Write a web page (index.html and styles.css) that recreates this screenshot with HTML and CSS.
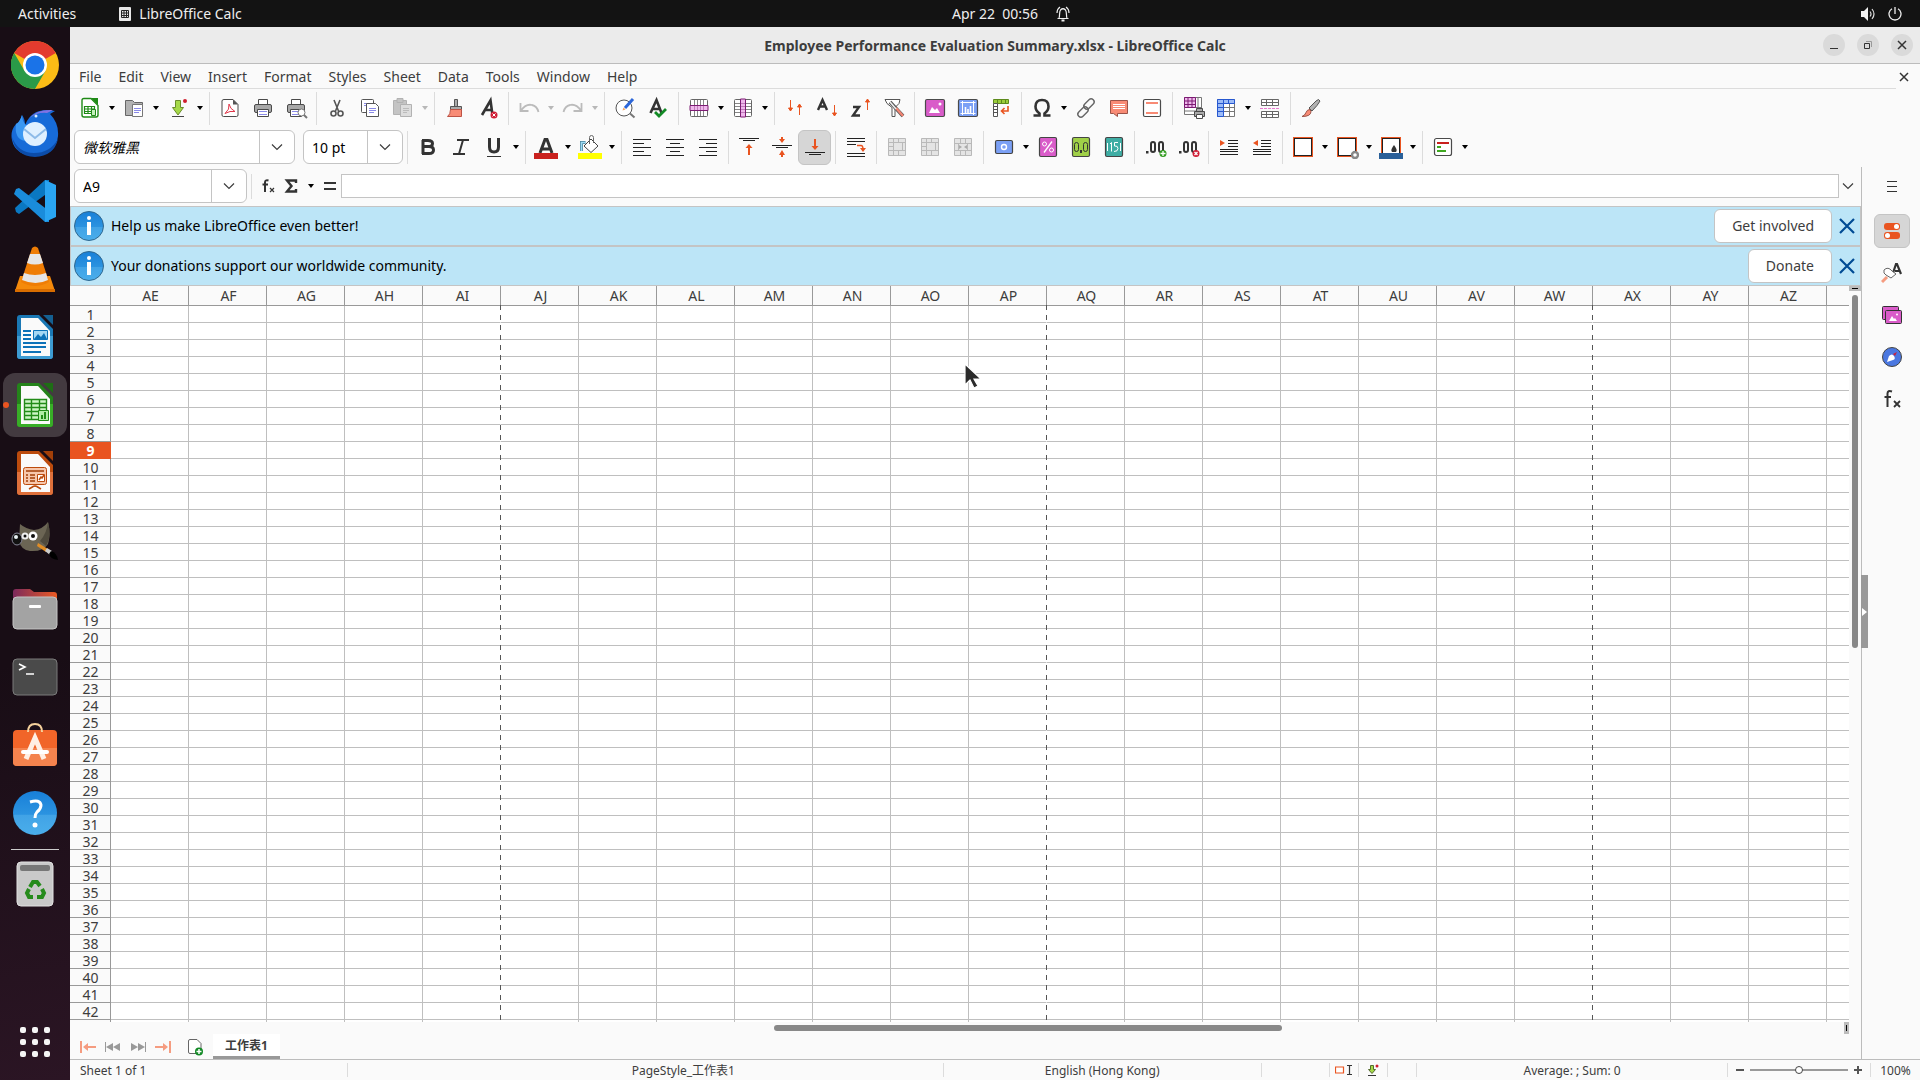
FILE: index.html
```
<!DOCTYPE html>
<html lang="en">

<head>
    <meta charset="UTF-8">
    <meta name="viewport" content="width=device-width, initial-scale=1.0">
    <title>Employee Performance Evaluation Summary.xlsx - LibreOffice Calc</title>
    <link rel="stylesheet" href="styles.css">
</head>

<body>
    <!-- shared shapes -->
    <svg class="defs" aria-hidden="true">
        <symbol id="arrow" viewBox="0 0 8 4"><path d="M1 0h6L4 4z" fill="currentColor"/></symbol>
        <symbol id="chevron" viewBox="0 0 12 8"><path d="M1 1.5l5 5 5-5" fill="none" stroke="currentColor" stroke-width="1.2"/></symbol>
        <symbol id="merge" viewBox="0 0 24 24"><path d="M3.500 3.500h17v17h-17zM3.500 7.500h5M3.500 11.500h5M3.500 15.500h5M8.500 3.500v17M8.500 7.500h12M8.500 15.500h12M13.500 3.500v4M13.500 15.500v5M17.500 7.500v8" fill="#e4e4e4" stroke="#b9b9b9"/></symbol>
        <linearGradient id="blue" x1="0" y1="0" x2="0" y2="1"><stop offset="0" stop-color="#187fd8"/><stop offset=".53" stop-color="#2b93e0"/><stop offset=".55" stop-color="#41a3e6"/><stop offset="1" stop-color="#4aaeeb"/></linearGradient>
        <symbol id="info" viewBox="0 0 30 30"><circle cx="15" cy="15" r="14.500" fill="url(#blue)" stroke="#31688f"/><circle cx="15" cy="7" r="2" fill="#fff"/><path d="M13 11h4v13h-4z" fill="#fff"/></symbol>
        <symbol id="cross" viewBox="0 0 16 16"><path d="M1 1l14 14M15 1L1 15" stroke="#004b94" stroke-width="2.200" fill="none"/></symbol>
    </svg>

    <header class="topbar">
        <div class="topbar-left">
            <button class="top-btn">Activities</button>
            <button class="top-btn app-name">
                <svg width="12" height="14" viewBox="0 0 12 14"><rect width="12" height="14" rx="1" fill="#e8e8e8"/><path d="M2.500 3.500h7v7h-7zM2.500 6h7M2.500 8.500h7M5 3.500v7M7.500 3.500v7" stroke="#222" fill="none"/></svg>
                LibreOffice Calc
            </button>
        </div>
        <button class="top-btn clock">
            <span>Apr 22&nbsp; 00:56</span>
            <svg width="14" height="16" viewBox="0 0 14 16" fill="none" stroke="#eee" stroke-width="1.200"><path d="M1.500 12.500h11M3 12c1-2 0-6 1.500-8Q7 1.500 9.500 4C11 6 10 10 11 12M1 7q0-4 3-6M13 7q0-4-3-6"/><path d="M5.500 14.500h3" stroke-width="2"/></svg>
        </button>
        <button class="top-btn system" aria-label="System menu">
            <svg width="16" height="14" viewBox="0 0 16 14"><path d="M1 4h3l4-4v14l-4-4H1z" fill="#f2f2f2"/><path d="M10 4.500q2 2.500 0 5M12 2q4 5 0 10" stroke="#ddd" stroke-width="1.200" fill="none"/></svg>
            <svg width="14" height="14" viewBox="0 0 14 14" fill="none" stroke="#eee" stroke-width="1.300"><path d="M4 1.800a6 6 0 1 0 6 0M7 0v7"/></svg>
        </button>
    </header>

    <div class="desktop">
        <nav class="dock" aria-label="Dock">
            <button class="dock-btn" aria-label="Chrome">
                <svg width="48" height="48" viewBox="0 0 48 48"><circle cx="24" cy="24" r="24" fill="#fbbc16"/><path d="M24 24L3.200 12A24 24 0 0 1 44.800 12z" fill="#e33b2e"/><path d="M3.200 12A24 24 0 0 0 24 48L34.400 30H24L13.600 30z" fill="#2a9a48"/><circle cx="24" cy="24" r="12" fill="#fff"/><circle cx="24" cy="24" r="9.500" fill="#1a73e8"/></svg>
            </button>
            <button class="dock-btn" aria-label="Thunderbird">
                <svg width="48" height="48" viewBox="0 0 48 48"><path d="M5 15q4-2 6-9 3 4 3 10Q20 1 36 1l8 1-5 3q9 9 8 22-2 19-23 20Q4 46 1 31q-2-9 4-16z" fill="#176bd8"/><path d="M5 15q-2 15 9 17-1-9 2-15-5-4-5-11-2 7-6 9z" fill="#3b98f2"/><path d="M19 9q7-9 23-8l-6 3Q26 3 19 9z" fill="#8272e2"/><path d="M1 28q3 19 23 20 19-1 23-18-8 14-24 14T1 28z" fill="#0c4ca9"/><circle cx="24" cy="25" r="12" fill="#dff0ff"/><path d="M13 20l11 9 11-9" fill="none" stroke="#8dbbe8" stroke-width="2"/><circle cx="25" cy="7" r="1.500" fill="#d9eefe"/></svg>
            </button>
            <button class="dock-btn" aria-label="Visual Studio Code">
                <svg width="44" height="44" viewBox="0 0 44 44"><path d="M32 1L2 29l1 4 3 2L36 13V1z" fill="#0a78c2"/><path d="M32 43L1 15l2-5 3-1 30 23v11z" fill="#1a8cdb"/><path d="M32 1l11 5v32l-11 5z" fill="#2aa5f2"/></svg>
            </button>
            <button class="dock-btn" aria-label="VLC">
                <svg width="42" height="46" viewBox="0 0 42 46"><path d="M6 30h30l5 15H1z" fill="#f58a0b"/><path d="M1 43h40v3H1z" fill="#d96d00"/><path d="M18 2q3-3 6 0l11 34q-14 8-28 0z" fill="#ef7d05"/><path d="M16 8h10l3 9q-8 3-16 0zM10 27q11 4 22 0l2 7q-12 6-26 0z" fill="#e6e6e6"/></svg>
            </button>
            <button class="dock-btn" aria-label="LibreOffice Writer">
                <svg width="38" height="46" viewBox="0 0 38 46"><path d="M4 1h19l14 14v27q0 3-3 3H4q-3 0-3-3V4q0-3 3-3z" fill="#1a78b5"/><path d="M4 22h33v20q0 3-3 3H4q-3 0-3-3V22z" fill="#3d9bd2"/><path d="M5 4h17l12 13v25H5z" fill="#fafafa"/><path d="M27 1h10v10z" fill="#145f91"/><path d="M7 17h8M7 21h8M7 25h8M7 29h23M7 33h23M7 38h18" stroke="#0d72b8" stroke-width="2"/><path d="M17.500 16.500h14v9h-14z" fill="#a6d7f3" stroke="#0d72b8"/><path d="M18 25l4-5 3 3 3-4 3 6z" fill="#0d72b8"/></svg>
            </button>
            <button class="dock-btn running" aria-label="LibreOffice Calc">
                <svg width="38" height="46" viewBox="0 0 38 46"><path d="M4 1h19l14 14v27q0 3-3 3H4q-3 0-3-3V4q0-3 3-3z" fill="#24831a"/><path d="M4 22h33v20q0 3-3 3H4q-3 0-3-3V22z" fill="#38ae27"/><path d="M5 4h17l12 13v25H5z" fill="#fafafa"/><path d="M27 1h10v10z" fill="#1e6d15"/><path d="M8.500 17.500h22v20h-22zM8.500 21.500h22M8.500 25.500h22M8.500 29.500h22M8.500 33.500h22M15.500 17.500v20M23.500 17.500v20" fill="#cdf5c5" stroke="#228b18" stroke-width="1.400"/><path d="M22.500 28.500h10v10h-10z" fill="#b0eca5" stroke="#228b18"/><path d="M25 37v-4h2v4M28 37v-7h2v7" fill="#228b18"/></svg>
            </button>
            <button class="dock-btn" aria-label="LibreOffice Impress">
                <svg width="38" height="46" viewBox="0 0 38 46"><path d="M4 1h19l14 14v27q0 3-3 3H4q-3 0-3-3V4q0-3 3-3z" fill="#bc4b0d"/><path d="M4 22h33v20q0 3-3 3H4q-3 0-3-3V22z" fill="#de703b"/><path d="M5 4h17l12 13v25H5z" fill="#fafafa"/><path d="M27 1h10v10z" fill="#a23f08"/><rect x="7.500" y="17.500" width="23" height="17" rx="2" fill="#f7c7ac" stroke="#bc4b0d"/><path d="M10 21h18M10 25h2m2 0h5M10 28h2m2 0h5M10 31h2m2 0h5" stroke="#a23f08" stroke-width="1.500"/><path d="M21.500 24.500h7v7h-7z" fill="#fff" stroke="#bc4b0d"/><path d="M23 30l2-3 1 1 2-3M19 35v2M18 36l-5 3M20 36l5 3" stroke="#bc4b0d" stroke-width="1.500" fill="none"/></svg>
            </button>
            <button class="dock-btn" aria-label="GIMP">
                <svg width="48" height="42" viewBox="0 0 48 42"><path d="M9 4q6 5 14 6 9-1 14-8 3 12 0 22-5 8-18 7-9-1-11-10z" fill="#6b6554"/><path d="M37 2q4 15-2 24l-6-5q7-8 8-19z" fill="#4f4a3d"/><ellipse cx="6" cy="19" rx="5" ry="6" fill="#111" stroke="#889"/><ellipse cx="5" cy="17" rx="2" ry="2" fill="#e8f0f4"/><circle cx="14" cy="16" r="3.500" fill="#eee"/><circle cx="22" cy="16" r="4.500" fill="#fff"/><circle cx="14" cy="16" r="1.500" fill="#111"/><circle cx="22" cy="16" r="2" fill="#111"/><path d="M27 23l10 6-2 3-9-6z" fill="#e08d25"/><path d="M36 28l5 3-2 4-5-4z" fill="#ccc"/><path d="M40 31q6 2 7 9-8-1-9-6z" fill="#000"/></svg>
            </button>
            <button class="dock-btn" aria-label="Files">
                <svg width="46" height="42" viewBox="0 0 46 42"><defs><linearGradient id="folder"><stop offset="0" stop-color="#7c2a5c"/><stop offset="1" stop-color="#ea5a24"/></linearGradient></defs><path d="M4 1h14l4 3h20q3 0 3 3v15H1V4q0-3 3-3z" fill="url(#folder)"/><rect x="1" y="9" width="44" height="32" rx="4" fill="#a3a3a3" stroke="#c4c4c4"/><rect x="17" y="17" width="12" height="3" rx="1" fill="#fff"/></svg>
            </button>
            <button class="dock-btn" aria-label="Terminal">
                <svg width="46" height="38" viewBox="0 0 46 38"><rect x="1" y="1" width="44" height="36" rx="4" fill="#4a4a4a" stroke="#7b7b7b"/><path d="M7 6l6 3-6 3M14 16h8" fill="none" stroke="#fff" stroke-width="1.600"/></svg>
            </button>
            <button class="dock-btn" aria-label="Software">
                <svg width="46" height="44" viewBox="0 0 46 44"><rect x="1" y="7" width="44" height="36" rx="4" fill="#f16529"/><path d="M1 25h44v14q0 4-4 4H5q-4 0-4-4z" fill="#f4834e"/><path d="M16 9q0-8 7-8t7 8" fill="none" stroke="#f5d19c" stroke-width="2"/><path d="M14 36l9-21 9 21" fill="none" stroke="#ffefe4" stroke-width="5"/><path d="M11 29h24" stroke="#fff" stroke-width="4" stroke-linecap="round"/></svg>
            </button>
            <button class="dock-btn" aria-label="Help">
                <svg width="46" height="46" viewBox="0 0 46 46"><circle cx="23" cy="23" r="22" fill="url(#blue)"/><path d="M18 12q10-3 11 3 0 4-4 7-2 2-2 6" fill="none" stroke="#fff" stroke-width="3"/><circle cx="23" cy="35" r="2.500" fill="#fff"/></svg>
            </button>
            <hr class="dock-line">
            <button class="dock-btn" aria-label="Trash">
                <svg width="38" height="46" viewBox="0 0 38 46"><rect x="1" y="1" width="36" height="44" rx="4" fill="#c9c9c9" stroke="#e2e2e2"/><rect x="4" y="4" width="30" height="6" rx="2" fill="#777"/><g fill="none" stroke="#268b1c" stroke-width="4"><path d="M14 26l3-5h4l3 4"/><path d="M26 28l2 4-2 4h-5"/><path d="M17 36h-4l-2-4 2-4"/></g></svg>
            </button>
            <button class="dock-btn apps" aria-label="Show Applications">
                <svg width="30" height="30" viewBox="0 0 30 30" fill="#f5f5f5"><rect width="6" height="6" rx="2"/><rect x="12" width="6" height="6" rx="2"/><rect x="24" width="6" height="6" rx="2"/><rect y="12" width="6" height="6" rx="2"/><rect x="12" y="12" width="6" height="6" rx="2"/><rect x="24" y="12" width="6" height="6" rx="2"/><rect y="24" width="6" height="6" rx="2"/><rect x="12" y="24" width="6" height="6" rx="2"/><rect x="24" y="24" width="6" height="6" rx="2"/></svg>
            </button>
        </nav>

        <main class="window">
            <div class="titlebar">
                <h1 class="title">Employee Performance Evaluation Summary.xlsx - LibreOffice Calc</h1>
                <div class="window-btns">
                    <button class="win-btn" aria-label="Minimize"><svg width="10" height="10" viewBox="0 0 10 10"><path d="M1 8.500h8" stroke="#333"/></svg></button>
                    <button class="win-btn" aria-label="Restore"><svg width="10" height="10" viewBox="0 0 10 10" fill="none"><path d="M1.500 3.500h5v5h-5z" stroke="#333"/><path d="M3 1.500h5.500v5.500" stroke="#999"/></svg></button>
                    <button class="win-btn" aria-label="Close"><svg width="10" height="10" viewBox="0 0 10 10"><path d="M1 1l8 8M9 1L1 9" stroke="#333" stroke-width="1.500"/></svg></button>
                </div>
            </div>

            <div class="menubar">
                <div class="menus">
                    <button>File</button>
                    <button>Edit</button>
                    <button>View</button>
                    <button>Insert</button>
                    <button>Format</button>
                    <button>Styles</button>
                    <button>Sheet</button>
                    <button>Data</button>
                    <button>Tools</button>
                    <button>Window</button>
                    <button>Help</button>
                </div>
                <button class="close-doc" aria-label="Close document"><svg width="10" height="10" viewBox="0 0 10 10"><path d="M1 1l8 8M9 1L1 9" stroke="#333" stroke-width="1.500"/></svg></button>
            </div>

            <!-- standard toolbar -->
            <div class="toolbar">
                <button class="tool" aria-label="New"><svg viewBox="0 0 24 24"><path d="M6 2.500h7l7 7V19q0 2-2 2H6q-2 0-2-2V4.500q0-2 2-2z" fill="#fff" stroke="#1f8a16" stroke-width="1.400"/><path d="M13 2h7v7z" fill="#1f8a16"/><path d="M6.500 10.500h10v7h-10zM6.500 13h10M6.500 15.500h10M10 10.500v7M13.500 10.500v7" fill="none" stroke="#1f8a16" stroke-width="1.200"/><path d="M13.500 13.500h4v6h-4z" fill="#c3f0bc" stroke="#1f8a16"/></svg></button><button class="drop" aria-label="New menu"><svg><use href="#arrow"/></svg></button>
                <button class="tool" aria-label="Open"><svg viewBox="0 0 24 24"><path d="M3.500 4.500h7l2 2h8v13h-17z" fill="#b2b2b2" stroke="#666"/><path d="M10.500 8.500h10v12h-10z" fill="#fff" stroke="#777"/><path d="M12 12.500h7M12 14.500h7M12 16.500h5" stroke="#8a8ae8"/></svg></button><button class="drop" aria-label="Open menu"><svg><use href="#arrow"/></svg></button>
                <button class="tool" aria-label="Save"><svg viewBox="0 0 24 24"><path d="M9.500 4.500h5v7h3L12 19l-5.500-7.500h3z" fill="#a5d948" stroke="#6a8c2a"/><path d="M6 20.500h12" stroke="#444"/><circle cx="19" cy="5" r="2" fill="#cf1e2e"/></svg></button><button class="drop" aria-label="Save menu"><svg><use href="#arrow"/></svg></button>
                <i class="sep"></i>
                <button class="tool" aria-label="Export as PDF"><svg viewBox="0 0 24 24"><path d="M6 3.500h9l5 5V19q0 1.500-1.500 1.500h-13Q4 20.500 4 19V5q0-1.500 2-1.500z" fill="#fff" stroke="#4a4a4a"/><path d="M15 3.500v5h5z" fill="#555"/><path d="M11 8q1 5 6 7.500-5-1-10 2 5-4 4-9.500z" fill="none" stroke="#e0384b"/></svg></button>
                <button class="tool" aria-label="Print"><svg viewBox="0 0 24 24"><path d="M7.500 3.500h9v5h-9z" fill="#fff" stroke="#4a4a4a"/><rect x="3.500" y="8.500" width="17" height="8" rx="1.500" fill="#a8a8a8" stroke="#4a4a4a"/><path d="M6.500 13.500h11v7h-11z" fill="#fff" stroke="#4a4a4a"/><path d="M8 15.500h8M8 18.500h8" stroke="#8a8ae8"/></svg></button>
                <button class="tool" aria-label="Print Preview"><svg viewBox="0 0 24 24"><path d="M7.500 3.500h9v5h-9z" fill="#fff" stroke="#4a4a4a"/><rect x="3.500" y="8.500" width="17" height="8" rx="1.500" fill="#a8a8a8" stroke="#4a4a4a"/><path d="M6.500 13.500h11v7h-11z" fill="#fff" stroke="#4a4a4a"/><path d="M8 15.500h6M8 18.500h6" stroke="#8a8ae8"/><circle cx="17.500" cy="16.500" r="3.500" fill="#fff" stroke="#777"/><path d="M20 19l3 3" stroke="#777" stroke-width="2"/></svg></button>
                <i class="sep"></i>
                <button class="tool" aria-label="Cut"><svg viewBox="0 0 24 24" fill="none" stroke="#555" stroke-width="1.600"><path d="M9 4l4.500 11M15 4l-4.500 11"/><circle cx="8.500" cy="17.500" r="2.500"/><circle cx="15.500" cy="17.500" r="2.500"/></svg></button>
                <button class="tool" aria-label="Copy"><svg viewBox="0 0 24 24"><rect x="3.500" y="3.500" width="12" height="13" rx="1" fill="#fff" stroke="#555"/><path d="M6 7.500h5M6 9.500h3" stroke="#8a8ae8"/><path d="M8.500 7.500h9l3 3v10h-12z" fill="#fff" stroke="#555"/><path d="M11 12.500h7M11 14.500h7M11 16.500h5" stroke="#8a8ae8"/></svg></button>
                <button class="tool" aria-label="Paste" disabled><svg viewBox="0 0 24 24"><path d="M2.500 4.500h13v14h-13z" fill="#c4c4c4" stroke="#b2b2b2"/><path d="M6 2.500h6v4H6z" fill="#c4c4c4" stroke="#b2b2b2"/><path d="M9.500 8.500h11v12h-11z" fill="#ddd" stroke="#b2b2b2"/><path d="M12 12.500h6M12 14.500h6M12 16.500h4" stroke="#bbb"/></svg></button><button class="drop" disabled aria-label="Paste menu"><svg><use href="#arrow"/></svg></button>
                <i class="sep"></i>
                <button class="tool" aria-label="Clone Formatting"><svg viewBox="0 0 24 24"><path d="M11.500 3.500h3v7h-3z" fill="#aaa" stroke="#555"/><path d="M7.500 10.500h11v3h-11z" fill="#aaa" stroke="#555"/><path d="M7.500 13.500h11v7h-14q3-2 3-7z" fill="#f88b75" stroke="#bd5345"/></svg></button>
                <button class="tool" aria-label="Clear Formatting"><svg viewBox="0 0 24 24"><path d="M6 19L14.500 4.500l2 14.500M9 14h7" fill="none" stroke="#333" stroke-width="2.600"/><circle cx="18" cy="19" r="3.500" fill="#d01e36"/><path d="M16.500 17.500l3 3m0-3l-3 3" stroke="#fff"/></svg></button>
                <i class="sep"></i>
                <button class="tool" aria-label="Undo" disabled><svg viewBox="0 0 24 24"><path d="M3.500 7v8h8M4 14.500q5-7 11-5.500 5 1 6.500 7" fill="none" stroke="#bbb" stroke-width="1.800"/></svg></button><button class="drop" disabled aria-label="Undo menu"><svg><use href="#arrow"/></svg></button>
                <button class="tool" aria-label="Redo" disabled><svg viewBox="0 0 24 24"><path d="M20.500 7v8h-8M20 14.500q-5-7-11-5.500-5 1-6.500 7" fill="none" stroke="#bbb" stroke-width="1.800"/></svg></button><button class="drop" disabled aria-label="Redo menu"><svg><use href="#arrow"/></svg></button>
                <i class="sep"></i>
                <button class="tool" aria-label="Find and Replace"><svg viewBox="0 0 24 24"><circle cx="11" cy="12" r="8" fill="#fff" stroke="#555"/><path d="M17 17.500l4.500 4" stroke="#777" stroke-width="2"/><path d="M12 12l8-9" stroke="#2c66d8" stroke-width="3"/><path d="M9.500 14.500l1-3 2 2z" fill="#f4a460"/></svg></button>
                <button class="tool" aria-label="Spelling"><svg viewBox="0 0 24 24"><path d="M4.500 17L10.500 4l5 13M7 13h8" fill="none" stroke="#333" stroke-width="2.600"/><path d="M9 16l4 4 7-7" fill="none" stroke="#138a26" stroke-width="2.800"/></svg></button>
                <i class="sep"></i>
                <button class="tool" aria-label="Row"><svg viewBox="0 0 24 24"><rect x="3.500" y="3.500" width="17" height="17" rx="1" fill="#fff" stroke="#666"/><path d="M7.500 4v16M10.500 4v16M13.500 4v16M16.500 4v16" stroke="#888"/><path d="M3 9.500h18v5H3z" fill="#efb8ec" stroke="#7c1b73"/><path d="M7.500 10v4M10.500 10v4M13.500 10v4M16.500 10v4" stroke="#c07aba"/></svg></button><button class="drop" aria-label="Row menu"><svg><use href="#arrow"/></svg></button>
                <button class="tool" aria-label="Column"><svg viewBox="0 0 24 24"><rect x="3.500" y="3.500" width="17" height="17" rx="1" fill="#fff" stroke="#666"/><path d="M4 7.500h16M4 10.500h16M4 13.500h16M4 16.500h16" stroke="#888"/><path d="M9.500 3v18h5V3z" fill="#efb8ec" stroke="#7c1b73"/><path d="M10 7.500h4M10 10.500h4M10 13.500h4M10 16.500h4" stroke="#c07aba"/></svg></button><button class="drop" aria-label="Column menu"><svg><use href="#arrow"/></svg></button>
                <i class="sep"></i>
                <button class="tool" aria-label="Sort"><svg viewBox="0 0 24 24" fill="#e95420" stroke="#e95420"><path d="M7.500 4v10M5.500 12l2 3 2-3zM16.500 19V9M14.500 11l2-3 2 3z"/></svg></button>
                <button class="tool" aria-label="Sort Ascending"><svg viewBox="0 0 24 24"><path d="M2 14L6.500 4 11 14M4 10.500h5" fill="none" stroke="#333" stroke-width="2.400"/><path d="M18.500 9v10M16.500 17l2 3 2-3z" fill="#e95420" stroke="#e95420"/></svg></button>
                <button class="tool" aria-label="Sort Descending"><svg viewBox="0 0 24 24"><path d="M4 11h6l-6 8.500h7" fill="none" stroke="#333" stroke-width="2.400"/><path d="M18.500 14V4M16.500 6l2-3 2 3z" fill="#e95420" stroke="#e95420"/></svg></button>
                <button class="tool" aria-label="AutoFilter"><svg viewBox="0 0 24 24"><path d="M3 3.500h15l-1 4-4 4v9h-3v-9l-5-4z" fill="#fff" stroke="#555"/><path d="M8 6l13 14" stroke="#555" stroke-width="3.600"/><path d="M14 12l7 8" stroke="#f28472" stroke-width="2.400"/><path d="M8 6l6 7" stroke="#eee" stroke-width="1.600"/></svg></button>
                <i class="sep"></i>
                <button class="tool" aria-label="Insert Image"><svg viewBox="0 0 24 24"><rect x="2.500" y="3.500" width="19" height="17" rx="1.500" fill="#d95cc9" stroke="#4a4a4a" stroke-width="1.200"/><path d="M6 17l3-6 3 3 2-2 3 5z" fill="#fff"/><circle cx="17" cy="8" r="1.500" fill="#fff"/></svg></button>
                <button class="tool" aria-label="Insert Chart"><svg viewBox="0 0 24 24"><rect x="2.500" y="3.500" width="19" height="17" rx="1.500" fill="#7ba0f5" stroke="#4a4a4a" stroke-width="1.200"/><path d="M6.500 5v14M4.500 17.500h15M4.500 6.500h15M17.500 5v14" stroke="#fff" fill="none"/><path d="M9.500 11v6M12 13v4M14.500 10v7" stroke="#fff" stroke-width="1.600"/></svg></button>
                <button class="tool" aria-label="Insert Pivot Table"><svg viewBox="0 0 24 24"><path d="M4.500 3.500h15v4h-15z" fill="#9bcd3c" stroke="#5d8a1c"/><path d="M8.500 3.500v4M12.500 3.500v4M16.500 3.500v4" stroke="#5d8a1c"/><path d="M4.500 7.500h4v13h-4zM4.500 10.500h4M4.500 13.500h4M4.500 16.500h4" fill="#fff" stroke="#555"/><path d="M19 10v5h-6M15.500 12l-3 3 3 3" fill="none" stroke="#e95420" stroke-width="1.600"/></svg></button>
                <i class="sep"></i>
                <button class="tool" aria-label="Special Character"><svg viewBox="0 0 24 24"><path d="M3.500 19.500h6v-2q-4-3-4-7 0-6.500 6.500-6.500t6.500 6.500q0 4-4 7v2h6" fill="none" stroke="#333" stroke-width="2.600"/></svg></button><button class="drop" aria-label="Special Character menu"><svg><use href="#arrow"/></svg></button>
                <button class="tool" aria-label="Insert Hyperlink"><svg viewBox="0 0 24 24" fill="none" stroke="#666" stroke-width="1.400"><rect x="9" y="5" width="12" height="6" rx="3" transform="rotate(-45 15 8)"/><rect x="3" y="13" width="12" height="6" rx="3" transform="rotate(-45 9 16)"/></svg></button>
                <button class="tool" aria-label="Insert Comment"><svg viewBox="0 0 24 24"><path d="M3.500 4.500h17v13h-10v3l-4-3h-3z" fill="#f88b75" stroke="#9a5348"/><path d="M6 8.500h12M6 10.500h12M6 12.500h12" stroke="#fff"/></svg></button>
                <button class="tool" aria-label="Headers and Footers"><svg viewBox="0 0 24 24"><rect x="3.500" y="3.500" width="17" height="17" rx="1.500" fill="#fff" stroke="#4a4a4a" stroke-width="1.200"/><path d="M6 7h12M6 17h12" stroke="#f88b75" stroke-width="2"/></svg></button>
                <i class="sep"></i>
                <button class="tool" aria-label="Define Print Area"><svg viewBox="0 0 24 24"><path d="M3.500 1.500h17v17h-17zM3.500 15h17M3.500 11.500h17M17 1.500v17" fill="#fff" stroke="#777"/><path d="M3.500 1.500h11v10h-11zM3.500 5h11M3.500 8.500h11M7 1.500v10M11 1.500v10" fill="#efb8ec" stroke="#7c1b73"/><path d="M15.500 12.500h6v3h-6zM13.500 15.500h10v5h-10z" fill="#aaa" stroke="#4a4a4a"/><path d="M15.500 18.500h6v4h-6z" fill="#fff" stroke="#4a4a4a"/></svg></button>
                <button class="tool" aria-label="Freeze Rows and Columns"><svg viewBox="0 0 24 24"><path d="M3.500 3.500h17v17h-17zM3.500 7.500h17M3.500 11.500h17M3.500 15.500h17M15.500 3.500v17" fill="#fff" stroke="#777"/><path d="M3.500 20.500v-17h17v4h-11v13z" fill="#9dbcf8" stroke="#2758d0"/><path d="M9.500 3.500v4h-6M14.500 3.500v4M3.500 11.500h6M3.500 15.500h6" stroke="#2758d0" fill="none"/></svg></button><button class="drop" aria-label="Freeze menu"><svg><use href="#arrow"/></svg></button>
                <button class="tool" aria-label="Split Window"><svg viewBox="0 0 24 24"><path d="M3.500 3.500h17v6h-17zM3.500 6.500h17M8.500 3.500v6M14.500 3.500v6M3.500 15.500h17v6h-17zM3.500 18.500h17M8.500 15.500v6M14.500 15.500v6" fill="#fff" stroke="#666"/><path d="M2 12.500h20" stroke="#e87ad0" stroke-dasharray="3 1"/></svg></button>
                <i class="sep"></i>
                <button class="tool" aria-label="Show Draw Functions"><svg viewBox="0 0 24 24"><path d="M10 12l7-7q3-3 4 0-2 4-8 10z" fill="#b2b2b2" stroke="#555"/><path d="M3 20.500q3-1 4-4 1-3 4-3l1 2q0 5-9 5z" fill="#f88b75" stroke="#9a5348"/></svg></button>
            </div>

            <!-- formatting toolbar -->
            <div class="toolbar">
                <div class="combo font-name"><input type="text" value="微软雅黑" aria-label="Font Name"><button aria-label="Choose font"><svg class="chev"><use href="#chevron"/></svg></button></div>
                <div class="combo font-size"><input type="text" value="10 pt" aria-label="Font Size"><button aria-label="Choose size"><svg class="chev"><use href="#chevron"/></svg></button></div>
                <i class="sep"></i>
                <button class="tool" aria-label="Bold"><svg viewBox="0 0 24 24"><path d="M6 5.500h6q4.500 0 4.500 3t-4.500 3H6m0 0h7q4.500 0 4.500 3.500t-4.500 3.500H6M7 5v14" fill="none" stroke="#333" stroke-width="3"/></svg></button>
                <button class="tool" aria-label="Italic"><svg viewBox="0 0 24 24"><path d="M8 5h12M4 19h12M14 5l-4 14" fill="none" stroke="#333" stroke-width="2"/></svg></button>
                <button class="tool" aria-label="Underline"><svg viewBox="0 0 24 24"><path d="M7.500 3v9q0 5 4.500 5t4.500-5V3" fill="none" stroke="#333" stroke-width="3"/><path d="M5 21.500h14" stroke="#333"/></svg></button><button class="drop" aria-label="Underline menu"><svg><use href="#arrow"/></svg></button>
                <i class="sep"></i>
                <button class="tool" aria-label="Font Color"><svg viewBox="0 0 24 24"><path d="M6 18L11 4.500h2L18 18M8 14h8" fill="none" stroke="#333" stroke-width="3"/><path d="M0 18h24v6H0z" fill="#c9211e"/></svg></button><button class="drop" aria-label="Font Color menu"><svg><use href="#arrow"/></svg></button>
                <button class="tool" aria-label="Background Color"><svg viewBox="0 0 24 24"><path d="M3.500 16V7.500h4" fill="none" stroke="#4a7f99" stroke-width="3"/><path d="M3.500 16V7.500h4" fill="none" stroke="#9ddcf5" stroke-width="1.600"/><path d="M6 11l7-7 7 7-7 6.500z" fill="#fff" stroke="#444"/><path d="M11.500 9V2.500q0-2 2-2t2 2V8" fill="none" stroke="#666"/><path d="M0 18h24v6H0z" fill="#ff0"/></svg></button><button class="drop" aria-label="Background Color menu"><svg><use href="#arrow"/></svg></button>
                <i class="sep"></i>
                <button class="tool" aria-label="Align Left"><svg viewBox="0 0 24 24" stroke="#222"><path d="M3 4.500h18M3 8.500h11M3 12.500h18M3 16.500h11M3 20.500h18"/></svg></button>
                <button class="tool" aria-label="Center Horizontally"><svg viewBox="0 0 24 24" stroke="#222"><path d="M3 4.500h18M7 8.500h10M3 12.500h18M7 16.500h10M3 20.500h18"/></svg></button>
                <button class="tool" aria-label="Align Right"><svg viewBox="0 0 24 24" stroke="#222"><path d="M3 4.500h18M10 8.500h11M3 12.500h18M10 16.500h11M3 20.500h18"/></svg></button>
                <i class="sep"></i>
                <button class="tool" aria-label="Align Top"><svg viewBox="0 0 24 24"><path d="M2 3.500h20M6 5.500h12" stroke="#222"/><path d="M12 20v-8" stroke="#e95420" stroke-width="2"/><path d="M8.500 13L12 9l3.500 4z" fill="#e95420"/></svg></button>
                <button class="tool" aria-label="Center Vertically"><svg viewBox="0 0 24 24"><path d="M2 10.500h20M6 12.500h12" stroke="#222"/><path d="M12 2v4M12 22v-3" stroke="#e95420" stroke-width="2"/><path d="M9 4h6l-3 4zM9 20h6l-3-5z" fill="#e95420"/></svg></button>
                <button class="tool active" aria-label="Align Bottom"><svg viewBox="0 0 24 24"><path d="M2 17.500h20M6 19.500h12" stroke="#222"/><path d="M12 4v8" stroke="#e95420" stroke-width="2"/><path d="M8.500 11L12 15l3.500-4z" fill="#e95420"/></svg></button>
                <i class="sep"></i>
                <button class="tool" aria-label="Wrap Text"><svg viewBox="0 0 24 24"><path d="M3 3.500h18M3 6.500h18M3 9.500h9M3 18.500h18M3 21.500h18" stroke="#222" stroke-width="1.200"/><path d="M13 10.500h4q2 0 2 4" fill="none" stroke="#e95420" stroke-width="1.500"/><path d="M16 13h6l-3 4z" fill="#e95420"/></svg></button>
                <i class="sep"></i>
                <button class="tool" aria-label="Merge and Center" disabled><svg><use href="#merge"/></svg></button>
                <button class="tool" aria-label="Merge Cells" disabled><svg><use href="#merge"/></svg></button>
                <button class="tool" aria-label="Unmerge Cells" disabled><svg viewBox="0 0 24 24"><path d="M3.500 3.500h17v17h-17zM3.500 8.500h17M3.500 15.500h17M9.500 3.500v5M14.500 3.500v5M9.500 15.500v5M14.500 15.500v5M7.500 8.500v7M16.500 8.500v7" fill="#e4e4e4" stroke="#b9b9b9"/><path d="M8 10l3 2-3 2zM16 10l-3 2 3 2z" fill="#aaa"/></svg></button>
                <i class="sep"></i>
                <button class="tool" aria-label="Format as Currency"><svg viewBox="0 0 24 24"><rect x="3.500" y="5.500" width="17" height="13" rx="1.500" fill="#7ba0f5" stroke="#444" stroke-width="1.200"/><circle cx="12" cy="12" r="2.500" fill="none" stroke="#fff" stroke-width="1.400"/></svg></button><button class="drop" aria-label="Currency menu"><svg><use href="#arrow"/></svg></button>
                <button class="tool" aria-label="Format as Percent"><svg viewBox="0 0 24 24"><rect x="3.500" y="2.500" width="17" height="19" rx="1.500" fill="#d95cc9" stroke="#444" stroke-width="1.200"/><path d="M8 17.500l8-11" stroke="#fff" stroke-width="1.300"/><circle cx="8.500" cy="9" r="2" fill="none" stroke="#fff"/><circle cx="15.500" cy="15" r="2" fill="none" stroke="#fff"/></svg></button>
                <button class="tool" aria-label="Format as Number"><svg viewBox="0 0 24 24"><rect x="3.500" y="2.500" width="17" height="19" rx="1.500" fill="#a0d048" stroke="#444" stroke-width="1.200"/><rect x="5.500" y="7.500" width="4" height="9" rx="2" fill="none" stroke="#333"/><rect x="14.500" y="7.500" width="4" height="9" rx="2" fill="none" stroke="#333"/><path d="M11 15h2v3h-2z" fill="#333"/></svg></button>
                <button class="tool" aria-label="Format as Date"><svg viewBox="0 0 24 24"><rect x="3.500" y="2.500" width="17" height="19" rx="1.500" fill="#3fada4" stroke="#444" stroke-width="1.200"/><path d="M5.500 8v8M18.500 8v8M8 9l1.500-1.500v9M16 7.500h-3.500v3.500q3.500-.5 3.500 2.500t-4 3" fill="none" stroke="#fff"/></svg></button>
                <i class="sep"></i>
                <button class="tool" aria-label="Add Decimal Place"><svg viewBox="0 0 24 24" fill="none"><path d="M3 16h2.500v2.500H3z" fill="#333"/><rect x="8" y="7" width="4" height="10" rx="2" stroke="#333" stroke-width="2"/><rect x="16" y="7" width="4" height="10" rx="2" stroke="#333" stroke-width="2"/><circle cx="20" cy="18.500" r="3.500" fill="#2f9a1d"/><path d="M20 16v5M17.500 18.500h5" stroke="#fff" stroke-width="1.300"/></svg></button>
                <button class="tool" aria-label="Delete Decimal Place"><svg viewBox="0 0 24 24" fill="none"><path d="M3 16h2.500v2.500H3z" fill="#333"/><rect x="8" y="7" width="4" height="10" rx="2" stroke="#333" stroke-width="2"/><rect x="16" y="7" width="4" height="10" rx="2" stroke="#333" stroke-width="2"/><circle cx="20" cy="18.500" r="3.500" fill="#d01e36"/><path d="M18.500 17l3 3m0-3l-3 3" stroke="#fff" stroke-width="1.300"/></svg></button>
                <i class="sep"></i>
                <button class="tool" aria-label="Increase Indent"><svg viewBox="0 0 24 24"><path d="M11 5.500h10M11 8.500h10M11 11.500h10M3 14.500h18M3 16.500h18M3 19.500h18" stroke="#222"/><path d="M3 5l5 3-5 3z" fill="#e95420"/></svg></button>
                <button class="tool" aria-label="Decrease Indent"><svg viewBox="0 0 24 24"><path d="M11 5.500h10M11 8.500h10M11 11.500h10M3 14.500h18M3 16.500h18M3 19.500h18" stroke="#222"/><path d="M8 5L3 8l5 3z" fill="#e95420"/></svg></button>
                <i class="sep"></i>
                <button class="tool" aria-label="Borders"><svg viewBox="0 0 24 24"><path d="M2 2h20v20H2z" fill="#e95420"/><path d="M3 3h18v18H3z" fill="#222"/><path d="M4 4h16v16H4z" fill="#fff"/></svg></button><button class="drop" aria-label="Borders menu"><svg><use href="#arrow"/></svg></button>
                <button class="tool" aria-label="Border Style"><svg viewBox="0 0 24 24"><path d="M2 2h20v20H2z" fill="#e95420"/><path d="M3 3h18v18H3z" fill="#222"/><path d="M4 4h16v16H4z" fill="#fff"/><circle cx="20" cy="20" r="3" fill="#fff" stroke="#888" stroke-width="2.400"/></svg></button><button class="drop" aria-label="Border Style menu"><svg><use href="#arrow"/></svg></button>
                <button class="tool" aria-label="Border Color"><svg viewBox="0 0 24 24"><path d="M2 2h20v20H2z" fill="#e95420"/><path d="M3 3h18v18H3z" fill="#222"/><path d="M4 4h16v16H4z" fill="#fff"/><path d="M15 10q4 5 2 7h-4q-2-2 2-7z" fill="#333"/><path d="M0 18h24v6H0z" fill="#2a6099"/></svg></button><button class="drop" aria-label="Border Color menu"><svg><use href="#arrow"/></svg></button>
                <i class="sep"></i>
                <button class="tool" aria-label="Conditional Formatting"><svg viewBox="0 0 24 24"><rect x="3.500" y="3.500" width="17" height="17" rx="2" fill="#fff" stroke="#4a4a4a" stroke-width="1.200"/><path d="M6 8h12" stroke="#c9211e" stroke-width="2"/><path d="M6 12h4M6 16h9" stroke="#3fa820" stroke-width="2"/></svg></button><button class="drop" aria-label="Conditional menu"><svg><use href="#arrow"/></svg></button>
            </div>

            <div class="workspace">
                <section class="document">
                    <div class="formula-bar">
                        <div class="combo name-box"><input type="text" value="A9" aria-label="Name Box"><button aria-label="Named ranges"><svg class="chev"><use href="#chevron"/></svg></button></div>
                        <i class="sep"></i>
                        <button class="formula-btn" aria-label="Function Wizard"><svg width="16" height="18" viewBox="0 0 16 18" fill="none" stroke="#333"><path d="M7.500 3.500q-3.500-1-3.500 2V15M1.500 7.500H7" stroke-width="2"/><path d="M9 11l4 4m0-4l-4 4" stroke-width="1.200"/></svg></button>
                        <button class="formula-btn" aria-label="Select Function"><svg width="14" height="16" viewBox="0 0 14 16"><path d="M12 5V2.500H3L7.500 8 3 13.500h9V11" fill="none" stroke="#333" stroke-width="2.400"/></svg></button>
                        <button class="drop" aria-label="Function menu"><svg><use href="#arrow"/></svg></button>
                        <button class="formula-btn equals" aria-label="Formula"><svg width="14" height="10" viewBox="0 0 14 10"><path d="M1 2h12M1 8h12" stroke="#333" stroke-width="2"/></svg></button>
                        <input type="text" class="formula-input" aria-label="Input line">
                        <button class="expand" aria-label="Expand Formula Bar"><svg class="chev"><use href="#chevron"/></svg></button>
                    </div>

                    <div class="infobar">
                        <svg width="30" height="30"><use href="#info"/></svg>
                        <p>Help us make LibreOffice even better!</p>
                        <button class="info-btn">Get involved</button>
                        <button class="info-close" aria-label="Close infobar"><svg width="16" height="16"><use href="#cross"/></svg></button>
                    </div>
                    <div class="infobar">
                        <svg width="30" height="30"><use href="#info"/></svg>
                        <p>Your donations support our worldwide community.</p>
                        <button class="info-btn">Donate</button>
                        <button class="info-close" aria-label="Close infobar"><svg width="16" height="16"><use href="#cross"/></svg></button>
                    </div>

                    <div class="sheet-area">
                        <div class="grid-wrap">
                            <table class="grid">
                                <colgroup id="cols"></colgroup>
                                <thead><tr id="head"></tr></thead>
                                <tbody id="rows"></tbody>
                            </table>
                        </div>
                        <div class="vscroll">
                            <div class="split-h"></div>
                            <div class="vthumb"></div>
                        </div>
                    </div>

                    <div class="hscroll">
                        <div class="hthumb"></div>
                        <div class="split-v"></div>
                    </div>

                    <div class="tabs">
                        <button class="nav-btn" aria-label="First sheet"><svg width="16" height="12" viewBox="0 0 16 12"><path d="M1 0v12" stroke="#f59c80" stroke-width="2"/><path d="M16 6H6" stroke="#f59c80" stroke-width="2"/><path d="M3 6l5-4v8z" fill="#f59c80"/></svg></button>
                        <button class="nav-btn" aria-label="Previous sheet"><svg width="16" height="10" viewBox="0 0 16 10" fill="#999"><path d="M0 0h1v10H0zM8 1v8L1 5zM15 1v8L8 5z"/></svg></button>
                        <button class="nav-btn" aria-label="Next sheet"><svg width="16" height="10" viewBox="0 0 16 10" fill="#999"><path d="M15 0h1v10h-1zM8 1v8l7-4zM1 1v8l7-4z"/></svg></button>
                        <button class="nav-btn" aria-label="Last sheet"><svg width="16" height="12" viewBox="0 0 16 12"><path d="M15 0v12" stroke="#f59c80" stroke-width="2"/><path d="M0 6h10" stroke="#f59c80" stroke-width="2"/><path d="M13 6L8 2v8z" fill="#f59c80"/></svg></button>
                        <button class="add-sheet" aria-label="Add sheet"><svg width="16" height="18" viewBox="0 0 16 18"><path d="M3 1.500h7l4 4V14q0 1.500-1.500 1.500h-9.500Q1.500 15.500 1.500 14V3q0-1.500 1.500-1.500z" fill="#fff" stroke="#666"/><circle cx="12" cy="13.500" r="4" fill="#138a26"/><path d="M12 11v5M9.500 13.500h5" stroke="#fff" stroke-width="1.500"/></svg></button>
                        <button class="tab">工作表1</button>
                    </div>
                </section>

                <aside class="sidebar">
                    <button class="side-handle" aria-label="Hide sidebar"><svg width="5" height="8" viewBox="0 0 5 8"><path d="M0 0v8l5-4z" fill="#fff"/></svg></button>
                    <button class="side-btn menu" aria-label="Sidebar Settings"><svg width="10" height="11" viewBox="0 0 10 11"><path d="M0 .5h10M0 5.500h10M0 10.500h10" stroke="#333"/></svg></button>
                    <button class="side-btn active" aria-label="Properties"><svg width="18" height="18" viewBox="0 0 18 18"><rect x="1" y="1" width="16" height="7" rx="3" fill="#e95420"/><rect x="1" y="10" width="16" height="7" rx="3" fill="#e95420"/><circle cx="13.500" cy="4.500" r="2.500" fill="#fff"/><circle cx="4.500" cy="13.500" r="2.500" fill="#fff"/></svg></button>
                    <button class="side-btn" aria-label="Styles"><svg width="22" height="22" viewBox="0 0 22 22"><path d="M12 11L15 2h1l4 10M14 9h5" fill="none" stroke="#333" stroke-width="2.200"/><path d="M3 8q4-4 8 1l4 3-5 4-5-3-2-2z" fill="#fff" stroke="#666"/><path d="M1 20l5-5" stroke="#f59c80" stroke-width="3"/></svg></button>
                    <button class="side-btn" aria-label="Gallery"><svg width="20" height="18" viewBox="0 0 20 18"><rect x=".5" y=".5" width="16" height="13" rx="1" fill="#d95cc9" stroke="#333"/><rect x="3.500" y="4.500" width="16" height="13" rx="1" fill="#d95cc9" stroke="#333"/><path d="M7 15l3-5 2 3 1-1 2 3z" fill="#fff"/><circle cx="15" cy="8.500" r="1" fill="#fff"/></svg></button>
                    <button class="side-btn" aria-label="Navigator"><svg width="20" height="20" viewBox="0 0 20 20"><circle cx="10" cy="10" r="9.500" fill="#4a77e0" stroke="#444"/><path d="M5 15l2-6q3-3 5 0t-1 4z" fill="#fff"/><path d="M15 5l-4 2 2 2z" fill="#d01e36"/></svg></button>
                    <button class="side-btn" aria-label="Functions"><svg width="20" height="20" viewBox="0 0 20 20" fill="none" stroke="#333"><path d="M10 2.500q-4.500-1.500-4.500 2V18M2.500 8H9" stroke-width="2"/><path d="M12 12l6 6m0-6l-6 6" stroke-width="1.800"/></svg></button>
                </aside>
            </div>

            <footer class="statusbar">
                <span class="sheet-count">Sheet 1 of 1</span>
                <span class="page-style">PageStyle_工作表1</span>
                <span class="language">English (Hong Kong)</span>
                <span class="blank"></span>
                <span class="small"><svg width="18" height="10" viewBox="0 0 18 10"><path d="M.5 2h8v6h-8z" fill="#fff" stroke="#e95420" stroke-width="1.200"/><path d="M12 .5h5M12 9.500h5M14.500 0v10" stroke="#333" stroke-width="1.200"/></svg></span>
                <span class="small"><svg width="14" height="12" viewBox="0 0 14 12"><path d="M4.500 1.500h3v4h2L6 9.500l-3.500-4h2z" fill="#a5d948" stroke="#556b2f"/><path d="M2 11.500h8" stroke="#333"/><circle cx="11" cy="2" r="1.500" fill="#cf1e2e"/></svg></span>
                <span class="small"></span>
                <span class="sum">Average: ; Sum: 0</span>
                <span class="zoom">
                    <button aria-label="Zoom Out"><svg width="8" height="8" viewBox="0 0 8 8"><path d="M0 4h8" stroke="#555" stroke-width="2"/></svg></button>
                    <input type="range" min="0" max="100" value="50" aria-label="Zoom">
                    <button aria-label="Zoom In"><svg width="8" height="8" viewBox="0 0 8 8"><path d="M0 4h8M4 0v8" stroke="#555" stroke-width="2"/></svg></button>
                </span>
                <span class="percent">100%</span>
            </footer>
        </main>
    </div>

    <svg class="pointer" width="18" height="28" viewBox="0 0 18 28" aria-hidden="true"><path d="M1 1v21l5-5 4 8 4-2-4-7h7z" fill="#2b2b2b" stroke="#fff" stroke-width="1.200"/></svg>

    <script>
        var columns = ["AE", "AF", "AG", "AH", "AI", "AJ", "AK", "AL", "AM", "AN", "AO", "AP", "AQ", "AR", "AS", "AT", "AU", "AV", "AW", "AX", "AY", "AZ", ""];
        var pageBreaks = ["AI", "AP", "AW"];
        var activeRow = 9;

        var cols = '<col class="row-col">';
        var head = '<th class="corner"></th>';
        var cells = "";
        for (var i = 0; i < columns.length; i++) {
            var isBreak = pageBreaks.includes(columns[i]);
            cols += '<col class="' + (columns[i] == "" ? "rest" : "cell-col") + '">';
            head += '<th scope="col"' + (isBreak ? ' class="break"' : "") + ">" + columns[i] + "</th>";
            cells += isBreak ? '<td class="break-cell"></td>' : "<td></td>";
        }

        // the last row is cut off by the bottom of the view
        var rows = "";
        for (var r = 1; r <= 43; r++) {
            rows += '<tr><th scope="row"' + (r == activeRow ? ' class="current"' : "") + ">" + (r < 43 ? r : "") + "</th>" + cells + "</tr>";
        }

        document.getElementById("cols").innerHTML = cols;
        document.getElementById("head").innerHTML = head;
        document.getElementById("rows").innerHTML = rows;
    </script>
</body>

</html>
```
FILE: styles.css
```
* {
    box-sizing: border-box;
}

body {
    display: flex;
    flex-direction: column;
    height: 100vh;
    margin: 0;
    overflow: hidden;
    background-color: #1a0f17;
    color: #3d3d3d;
    font-family: "Noto Sans", "Noto Sans CJK SC", sans-serif;
    font-size: 14px;
}

button {
    display: flex;
    align-items: center;
    justify-content: center;
    padding: 0;
    border: none;
    background: none;
    color: inherit;
    font: inherit;
}

input {
    min-width: 0;
    color: #000;
    font: inherit;
}

svg {
    display: block;
    flex: none;
}

.defs {
    position: absolute;
    width: 0;
    height: 0;
}

/* top panel */
.topbar {
    display: grid;
    grid-template-columns: 1fr auto 1fr;
    height: 27px;
    flex: none;
    padding: 0 18px;
    background-color: #131313;
    color: #eee;
}

.topbar-left {
    display: flex;
    gap: 43px;
}

.app-name {
    gap: 8px;
}

.clock {
    gap: 18px;
    padding-left: 102px;
}

.system {
    justify-self: end;
    gap: 12px;
}

.desktop {
    display: flex;
    flex: 1;
    min-height: 0;
}

/* dock */
.dock {
    display: flex;
    flex-direction: column;
    align-items: center;
    width: 70px;
    flex: none;
    padding: 6px 3px 4px;
    background: linear-gradient(170deg, #180d15 60%, #2b1524);
}

.dock-btn {
    position: relative;
    width: 64px;
    height: 64px;
    margin: 0 0 4px;
    border-radius: 12px;
    flex: none;
}

.dock-btn.running {
    background-color: #433a40;
}

.running::before {
    content: "";
    position: absolute;
    left: 0;
    top: 29px;
    width: 6px;
    height: 6px;
    border-radius: 50%;
    background-color: #e95420;
}

.dock-line {
    width: 48px;
    height: 1px;
    margin: 0 0 2px;
    border: none;
    background-color: #ccc;
}

.apps {
    margin: auto 0 2px;
}

/* window */
.window {
    display: flex;
    flex-direction: column;
    flex: 1;
    min-width: 0;
    background-color: #fafafa;
}

.titlebar {
    display: grid;
    grid-template-columns: 1fr auto 1fr;
    align-items: center;
    height: 37px;
    flex: none;
    padding: 0 7px;
    border-bottom: 1px solid #bcbcbc;
    background-color: #ebebeb;
}

.title {
    grid-column: 2;
    margin: 0;
    font-size: 14px;
    font-weight: bold;
}

.window-btns {
    display: flex;
    justify-self: end;
    gap: 12px;
}

.win-btn {
    width: 22px;
    height: 22px;
    border-radius: 50%;
    background-color: #dadada;
}

.menubar {
    display: flex;
    height: 25px;
    flex: none;
}

.menus {
    display: flex;
    flex: 1;
    border-bottom: 1px solid #dcdcdc;
}

.menus button {
    padding: 0 8px 0 9px;
}

.close-doc {
    width: 24px;
    padding-right: 8px;
}

.toolbar {
    display: flex;
    align-items: center;
    height: 39px;
    flex: none;
    padding: 0 3px 1px;
}

.tool {
    width: 33px;
    height: 35px;
    border: 1px solid transparent;
    border-radius: 6px;
}

.tool svg {
    width: 24px;
    height: 24px;
}

.tool.active,
.side-btn.active {
    border: 1px solid #c4c4c4;
    background-color: #d6d6d6;
}

.drop {
    width: 11px;
    height: 33px;
    color: #000;
}

.drop:disabled {
    color: #b8b8b8;
}

.drop svg {
    width: 8px;
    height: 4px;
}

.sep {
    width: 1px;
    height: 33px;
    margin: 0 3px 0 4px;
    background-color: #dcdcdc;
    flex: none;
}

.chev {
    width: 12px;
    height: 8px;
}

.combo {
    display: flex;
    height: 34px;
    margin-left: 1px;
    border: 1px solid #c4c4c4;
    border-radius: 6px;
    background-color: #fff;
    overflow: hidden;
}

.combo input {
    flex: 1;
    padding: 0 8px;
    border: none;
    background: none;
}

.combo button {
    width: 35px;
    border-left: 1px solid #c4c4c4;
}

.font-name {
    width: 221px;
}

.font-name input {
    font-style: italic;
}

.font-size {
    width: 100px;
    margin-left: 8px;
}

/* document area */
.workspace {
    display: flex;
    flex: 1;
    min-height: 0;
}

.document {
    display: flex;
    flex-direction: column;
    flex: 1;
    min-width: 0;
}

.formula-bar {
    display: flex;
    align-items: center;
    height: 39px;
    flex: none;
    padding: 0 0 1px 3px;
}

.name-box {
    width: 173px;
}

.formula-bar .sep {
    height: 25px;
    margin-right: 6px;
}

.formula-btn {
    width: 22px;
    height: 25px;
}

.formula-bar .drop {
    width: 17px;
}

.formula-input {
    flex: 1;
    height: 24px;
    border: 1px solid #c4c4c4;
    background-color: #fff;
}

.expand {
    width: 22px;
    padding-right: 4px;
}

.infobar {
    display: flex;
    align-items: center;
    height: 40px;
    flex: none;
    padding: 0 5px 0 3px;
    border: 1px solid #c4c4c4;
    background-color: #bce5f7;
    color: #000;
}

.infobar p {
    flex: 1;
    margin: 0 7px;
    padding-bottom: 2px;
}

.info-btn {
    height: 34px;
    padding: 0 17px 2px;
    border: 1px solid #c4c4c4;
    border-radius: 6px;
    background-color: #fff;
    color: #3d3d3d;
}

.info-close {
    margin-left: 7px;
}

.sheet-area {
    display: flex;
    flex: 1;
    min-height: 0;
}

.grid-wrap {
    flex: 1;
    min-width: 0;
    overflow: hidden;
    background-color: #fff;
}

.grid {
    width: 100%;
    table-layout: fixed;
    border-collapse: separate;
    border-spacing: 0;
}

.row-col {
    width: 41px;
}

.cell-col {
    width: 78px;
}

.grid th {
    height: 17px;
    padding: 1px 0 0 1px;
    border-right: 1px solid #999;
    border-bottom: 1px solid #999;
    background-color: #fafafa;
    font-weight: normal;
    line-height: 15px;
}

.grid thead th {
    height: 20px;
    padding: 0 0 0 2px;
}

.grid thead th:last-child {
    border-right: none;
}

.grid td {
    padding: 0;
    border-right: 1px solid #bfbfbf;
    border-bottom: 1px solid #bfbfbf;
}

.grid td:last-child {
    border-right: none;
}

.grid .break-cell {
    border-right-color: transparent;
}

/* page break line, runs down from its column header */
.break {
    position: relative;
}

.break::after {
    content: "";
    position: absolute;
    top: 100%;
    right: -1px;
    width: 1px;
    height: 100vh;
    background: repeating-linear-gradient(#555 0 5px, transparent 5px 10px);
}

.grid .current {
    border-color: #e95420;
    background-color: #e95420;
    color: #fff;
    font-weight: bold;
}

.vscroll {
    width: 12px;
    flex: none;
}

.split-h {
    height: 5px;
    border: solid #bcbcbc;
    border-width: 2px 3px;
    background-color: #000;
}

.vthumb {
    width: 6px;
    height: 48%;
    margin: 4px 0 0 3px;
    border-radius: 3px;
    background-color: #888;
}

.hscroll {
    display: flex;
    align-items: center;
    justify-content: space-between;
    height: 12px;
    flex: none;
    padding: 0 12px 0 39.3%;
}

.hthumb {
    width: 47.3%;
    height: 6px;
    border-radius: 3px;
    background-color: #888;
}

.split-v {
    width: 5px;
    height: 12px;
    border: solid #bcbcbc;
    border-width: 3px 2px;
    background-color: #000;
}

.tabs {
    display: flex;
    align-items: center;
    height: 25px;
    flex: none;
    padding-left: 10px;
}

.nav-btn {
    width: 16px;
    margin-right: 9px;
}

.add-sheet {
    width: 20px;
    margin: 0 8px 0 5px;
}

.tab {
    height: 25px;
    padding: 0 12px;
    border-bottom: 3px solid #999;
    background-color: #fff;
    font-size: 12px;
    font-weight: bold;
}

/* sidebar */
.sidebar {
    position: relative;
    display: flex;
    flex-direction: column;
    align-items: center;
    width: 59px;
    flex: none;
    padding: 2px 0 0 1px;
    border-left: 1px solid #bcbcbc;
}

.side-btn {
    width: 36px;
    height: 34px;
    margin-bottom: 8px;
    border-radius: 6px;
}

.side-btn.menu {
    margin-bottom: 11px;
}

.side-handle {
    position: absolute;
    left: -1px;
    top: calc(50% - 38px);
    width: 7px;
    height: 73px;
    background-color: #999;
}

/* status bar */
.statusbar {
    display: flex;
    align-items: center;
    height: 21px;
    flex: none;
    border-top: 1px solid #bcbcbc;
    font-size: 12px;
}

.statusbar > span {
    display: flex;
    align-items: center;
    justify-content: center;
    height: 14px;
    border-right: 1px solid #dcdcdc;
    white-space: nowrap;
}

.statusbar .sheet-count {
    flex: 268;
    justify-content: flex-start;
    padding-left: 10px;
}

.statusbar .page-style {
    flex: 521;
    padding-left: 76px;
}

.language {
    flex: 318;
}

.statusbar .blank {
    flex: 68;
}

.statusbar .small {
    flex: 0 0 29px;
}

.sum {
    flex: 311;
}

.zoom {
    gap: 6px;
    width: 143px;
}

.zoom input {
    width: 98px;
    height: 14px;
    margin: 0;
    background: none;
    appearance: none;
}

.zoom input::-webkit-slider-runnable-track {
    height: 2px;
    background-color: #999;
}

.zoom input::-webkit-slider-thumb {
    width: 8px;
    height: 8px;
    margin-top: -3px;
    border: 1px solid #444;
    border-radius: 50%;
    background-color: #fff;
    appearance: none;
}

.statusbar .percent {
    width: 49px;
    border-right: none;
}

/* mouse pointer over the sheet */
.pointer {
    position: absolute;
    left: 50.2%;
    top: 33.6%;
}
```
